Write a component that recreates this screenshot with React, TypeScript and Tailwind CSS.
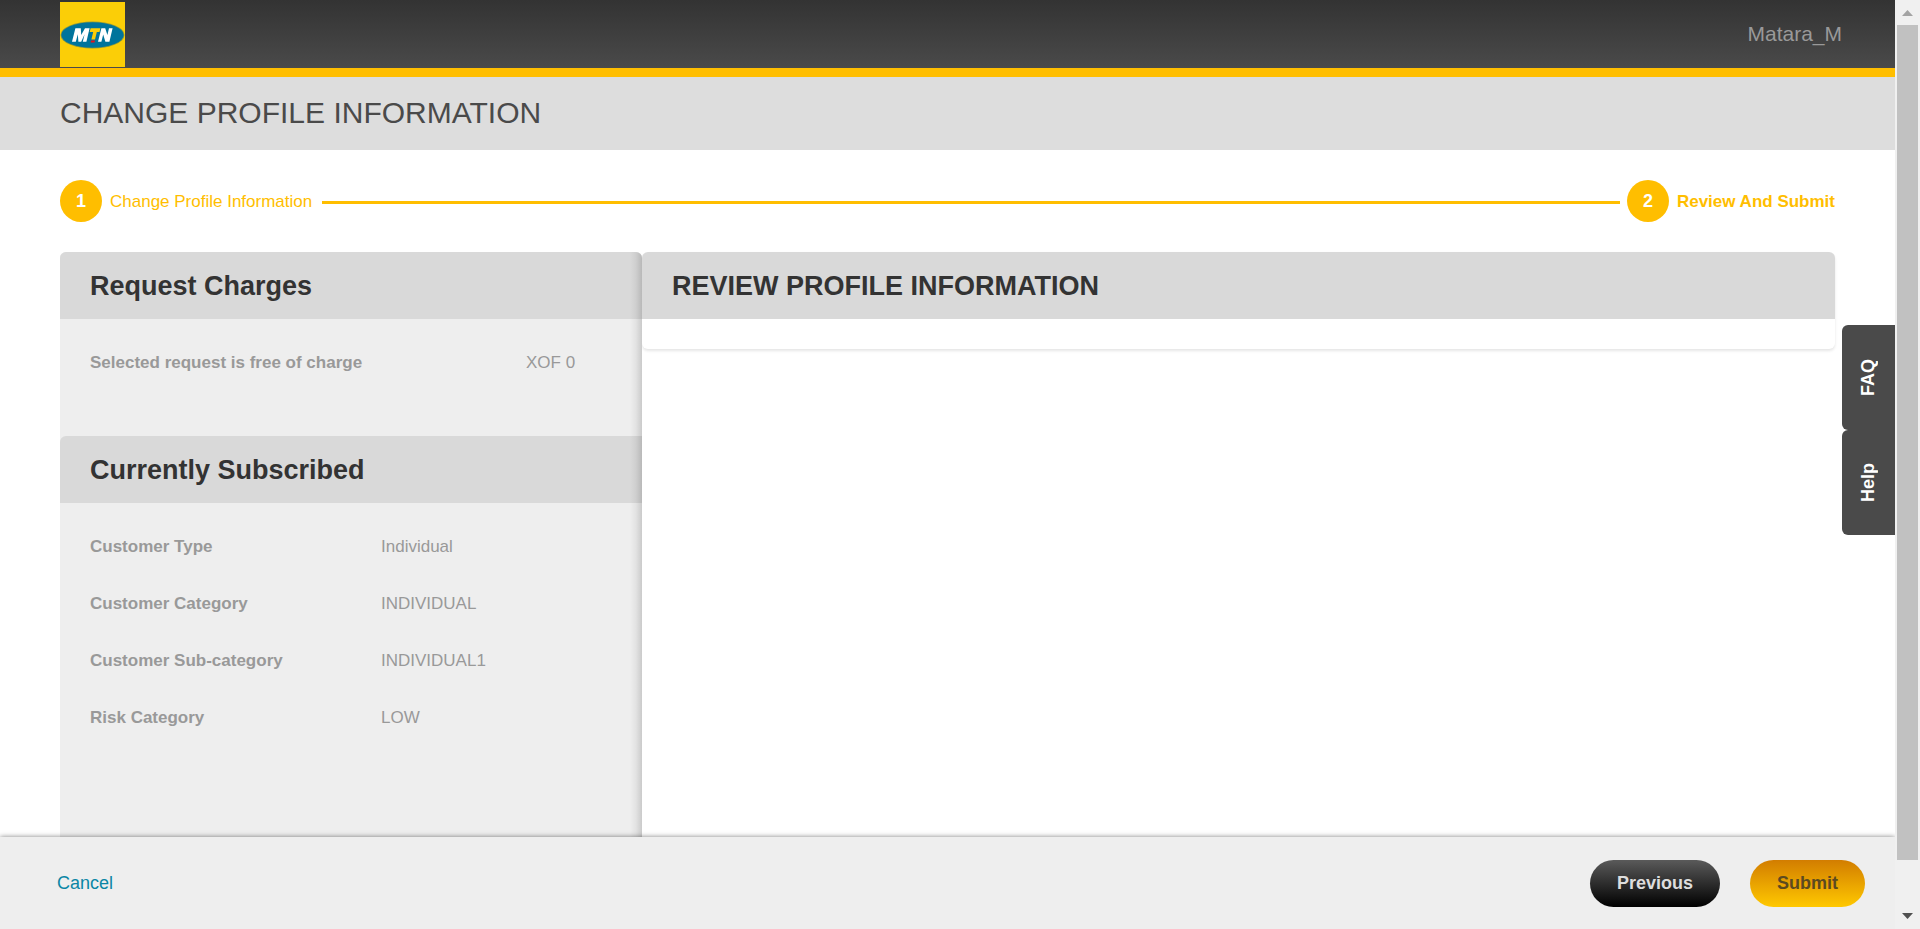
const subscription = [
  { label: 'Customer Type', value: 'Individual' },
  { label: 'Customer Category', value: 'INDIVIDUAL' },
  { label: 'Customer Sub-category', value: 'INDIVIDUAL1' },
  { label: 'Risk Category', value: 'LOW' },
];

function Logo() {
  return (
    <svg className="mt-px h-[65px] w-[65px]" viewBox="0 0 65 65" role="img" aria-label="MTN">
      <rect width="65" height="65" fill="#fbce07" />
      <ellipse cx="32.5" cy="33" rx="32" ry="13.5" fill="#8f9a3c" />
      <ellipse cx="32.5" cy="33" rx="31.2" ry="12.8" fill="#00749c" />
      <path
        d="M12 39.8 15.4 26.3H20.8L21.2 33 25 26.3H29.6L26.4 39.8H22.8L24.6 32.2 21.2 39.8H18.4L17.8 32.2 15.8 39.8Z"
        fill="#fff"
      />
      <path d="M30.6 26.3H40.4L39.5 30H36.8L35 37.6H31.4L33.2 30H29.7Z" fill="#fbce07" />
      <path d="M31.1 38.6H35L34.5 40.6H30.7Z" fill="#e2131e" />
      <path
        d="M38 39.8 41.4 26.3H45.2L47.4 33 49 26.3H52.6L49.4 39.8H45.4L43.2 32.4 41.4 39.8Z"
        fill="#fff"
      />
    </svg>
  );
}

function StepBadge({ number }: { number: number }) {
  return (
    <span className="flex h-[42px] w-[42px] shrink-0 items-center justify-center rounded-full bg-[#ffbe00] text-[18px] font-bold text-white">
      {number}
    </span>
  );
}

function SideTab({ label }: { label: string }) {
  return (
    <button
      type="button"
      className="flex h-[105px] w-[53px] items-center justify-center rounded-l-md bg-[#4a4a4a] text-[18px] font-bold text-white"
    >
      <span className="rotate-180 [writing-mode:vertical-rl]">{label}</span>
    </button>
  );
}

function PageScrollbar() {
  return (
    <div aria-hidden="true" className="flex w-[25px] shrink-0 flex-col items-center bg-[#f0f0f0]">
      <svg className="h-[25px] w-[25px] shrink-0" viewBox="0 0 25 25">
        <path d="M7 16 12.5 10 18 16Z" fill="#a3a3a3" />
      </svg>
      <div className="flex w-full flex-1 flex-col px-0.5">
        <div className="h-[95%] bg-[#c1c1c1]" />
      </div>
      <svg className="h-[25px] w-[25px] shrink-0" viewBox="0 0 25 25">
        <path d="M7 9H18L12.5 15Z" fill="#505050" />
      </svg>
    </div>
  );
}

export default function App() {
  return (
    <div className="flex h-screen bg-white font-['Liberation_Sans',Arial,sans-serif] text-[17px]">
      <div className="relative flex min-w-0 flex-1 flex-col">
        <header className="flex h-[77px] shrink-0 items-center justify-between border-b-[9px] border-[#ffbe00] bg-linear-to-b/srgb from-[#333] to-[#4a4a4a] pr-[53px] pl-[60px]">
          <Logo />
          <span className="text-[21px] text-[#999]">Matara_M</span>
        </header>
        <div className="flex h-[73px] shrink-0 items-center bg-[#ddd] px-[60px] pb-0.5">
          <h1 className="text-[30px] text-[#4a4a4a]">CHANGE PROFILE INFORMATION</h1>
        </div>

        <main className="flex min-h-0 flex-1 flex-col overflow-hidden px-[60px] pt-[30px]">
          <ol className="flex items-center text-[#ffbe00]">
            <li className="flex items-center gap-2">
              <StepBadge number={1} />
              <span className="pt-px">Change Profile Information</span>
            </li>
            <li role="presentation" className="mt-0.5 mr-[7px] ml-[10px] h-[3px] flex-1 bg-[#ffbe00]" />
            <li className="flex items-center gap-2" aria-current="step">
              <StepBadge number={2} />
              <span className="pt-px font-bold">Review And Submit</span>
            </li>
          </ol>

          <div className="mt-[30px] flex min-h-0 flex-1 items-start">
            <aside className="relative h-full w-[582px] shrink-0 rounded-t-md bg-[#eee] text-[#999]">
              <h2 className="flex h-[67px] items-center rounded-t-md bg-[#d9d9d9] px-[30px] pt-px text-[27px] font-bold text-[#333]">
                Request Charges
              </h2>
              <dl className="pt-[15px] pb-[45px]">
                <div className="flex h-[57px] items-center pl-[30px]">
                  <dt className="w-[436px] font-bold">Selected request is free of charge</dt>
                  <dd>XOF 0</dd>
                </div>
              </dl>
              <h2 className="flex h-[67px] items-center rounded-tl-md bg-[#d9d9d9] px-[30px] pt-px text-[27px] font-bold text-[#333]">
                Currently Subscribed
              </h2>
              <dl className="pt-[15px]">
                {subscription.map(({ label, value }) => (
                  <div key={label} className="flex h-[57px] items-center pl-[30px]">
                    <dt className="w-[291px] font-bold">{label}</dt>
                    <dd>{value}</dd>
                  </div>
                ))}
              </dl>
              <div className="pointer-events-none absolute inset-y-0 right-0 w-3 rounded-tr-md bg-linear-to-r from-transparent via-black/5 to-black/15" />
            </aside>

            <section className="min-w-0 flex-1 rounded-md bg-white pb-[30px] shadow-[0_2px_3px_rgba(0,0,0,0.1)]">
              <h2 className="flex h-[67px] items-center rounded-t-md bg-[#d9d9d9] px-[30px] pt-px text-[27px] font-bold text-[#333]">
                REVIEW PROFILE INFORMATION
              </h2>
            </section>
          </div>
        </main>

        <footer className="z-10 flex h-[92px] shrink-0 items-center justify-between bg-[#eee] pr-[30px] pl-[57px] text-[18px] shadow-[0_0_5px_rgba(0,0,0,0.5)] [clip-path:inset(-10px_0_0_0)]">
          <a href="#cancel" className="text-[#0a86a5]">
            Cancel
          </a>
          <div className="flex gap-[30px] font-bold">
            <button
              type="button"
              className="h-[47px] w-[130px] rounded-full bg-linear-to-b/srgb from-[#5a5a5a] to-black text-[#ddd]"
            >
              Previous
            </button>
            <button
              type="submit"
              className="h-[47px] w-[115px] rounded-full bg-linear-to-b/srgb from-[#d27d00] to-[#ffc800] text-[#5c4a20]"
            >
              Submit
            </button>
          </div>
        </footer>

        <nav aria-label="Support" className="absolute top-[325px] right-0 z-20">
          <SideTab label="FAQ" />
          <SideTab label="Help" />
        </nav>
      </div>
      <PageScrollbar />
    </div>
  );
}
